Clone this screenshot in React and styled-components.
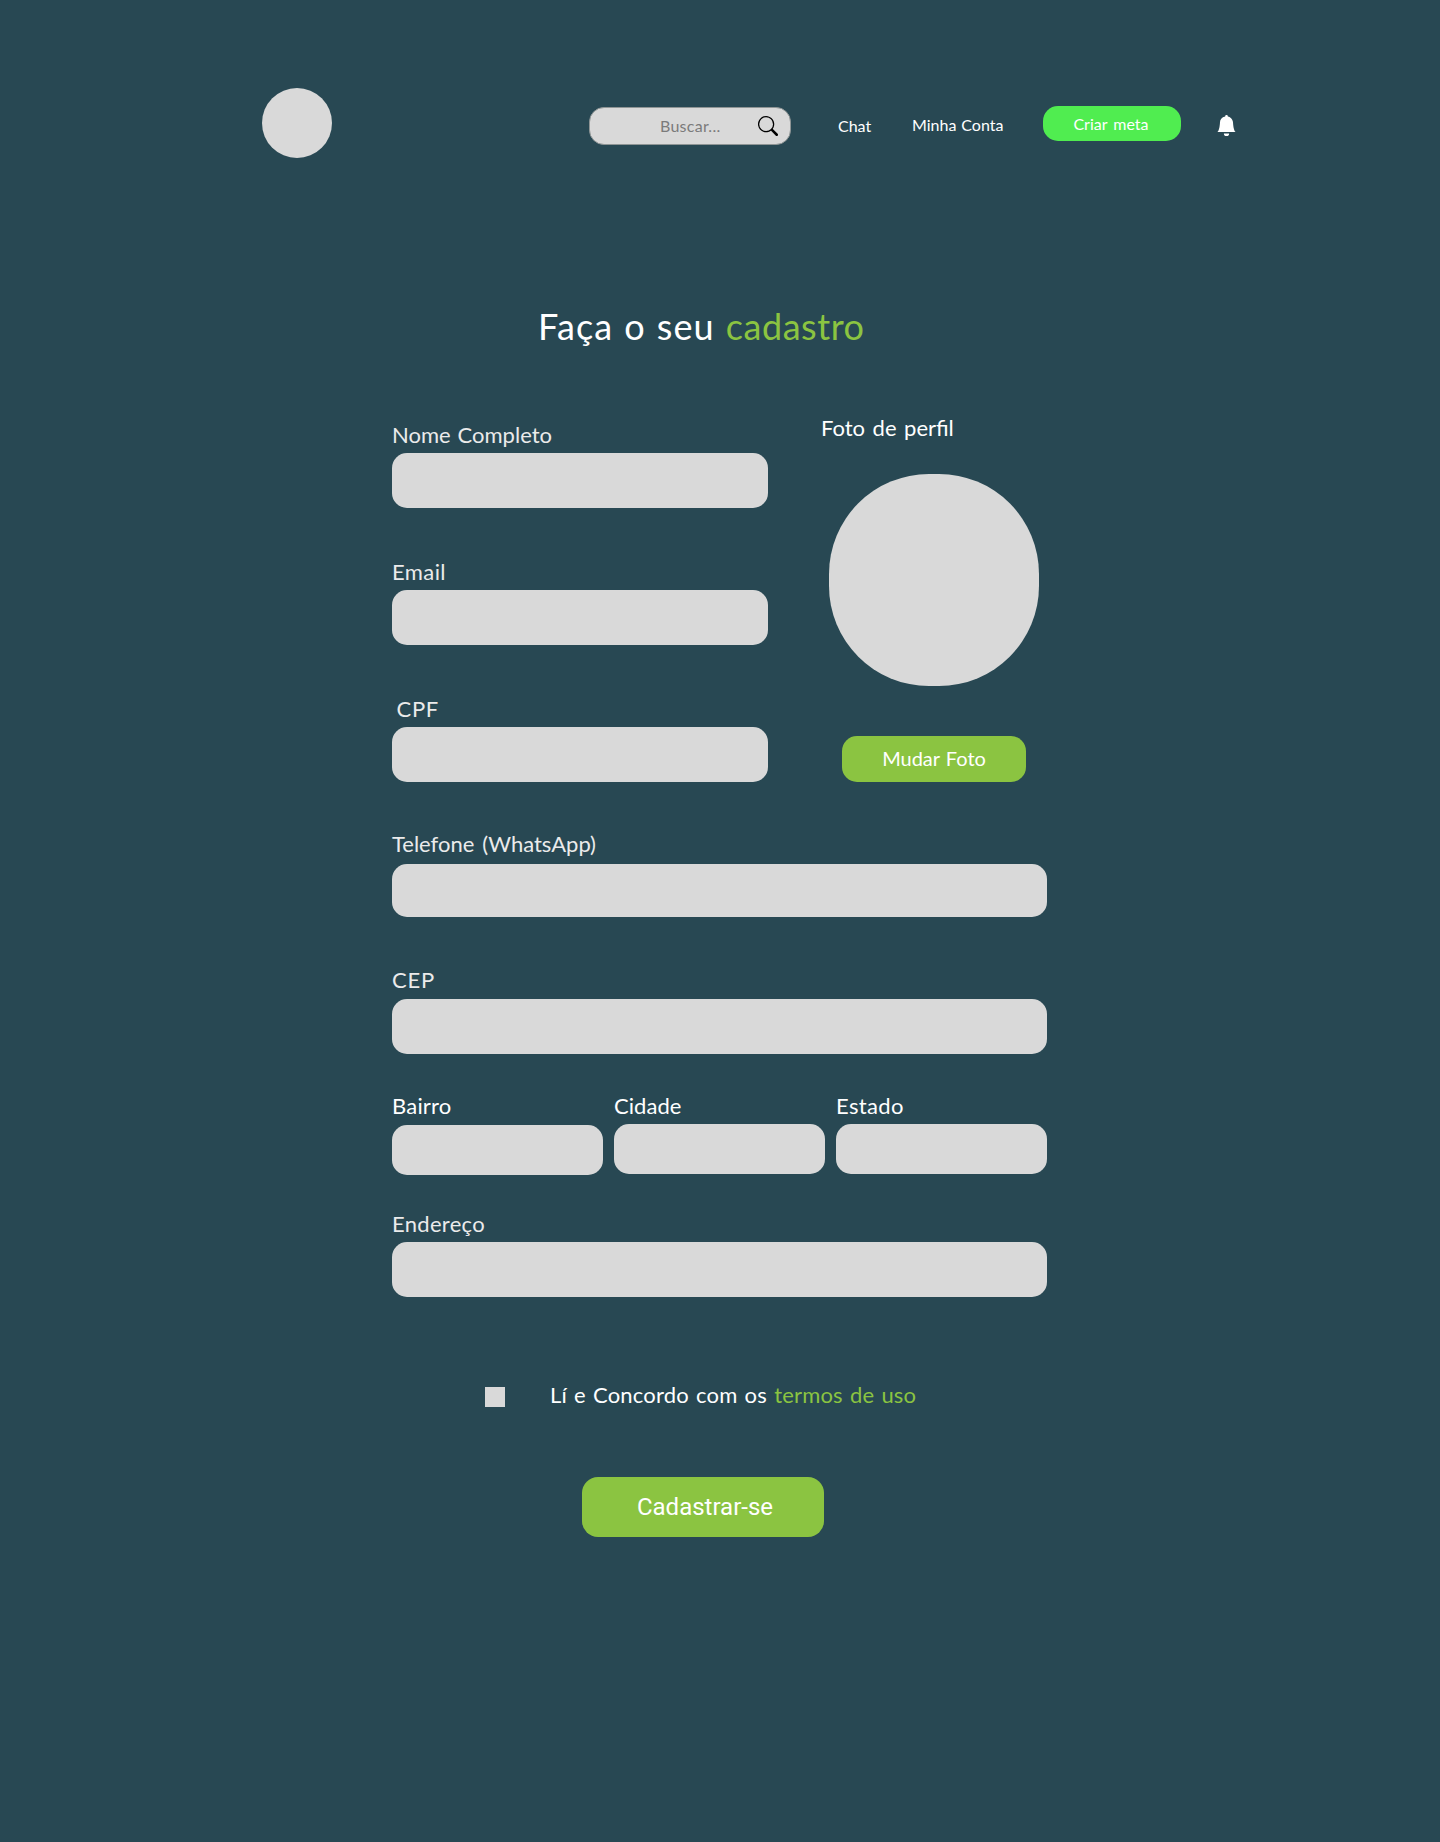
import React from "react";
import styled, { createGlobalStyle } from "styled-components";
import { BsBellFill, BsSearch } from "react-icons/bs";

const colors = {
  page: "#284853",
  field: "#d9d9d9",
  green: "#8bc441",
  bright: "#50ed50",
  label: "#ebebeb",
};

const GlobalStyle = createGlobalStyle`
  *, *::before, *::after { box-sizing: border-box; }
  body {
    margin: 0;
    background: ${colors.page};
    color: #fff;
    font-family: Lato, "Open Sans", sans-serif;
  }
  input, button { font-family: inherit; }
`;

const Page = styled.div`
  min-height: 1842px;
  padding-top: 88px;
`;

const Header = styled.header`
  display: flex;
  align-items: flex-start;
  height: 70px;
  padding-left: 262px;
`;

const Logo = styled.div`
  width: 70px;
  height: 70px;
  border-radius: 50%;
  background: ${colors.field};
`;

const SearchBox = styled.label`
  display: flex;
  align-items: center;
  width: 202px;
  height: 38px;
  margin: 19px 0 0 257px;
  padding: 0 12px 0 70px;
  border: 1px solid #8f9595;
  border-radius: 15px;
  background: ${colors.field};
  color: #000;
`;

const SearchInput = styled.input`
  width: 98px;
  height: 20px;
  margin-bottom: 2px;
  padding: 0;
  border: 0;
  outline: 0;
  background: transparent;
  font-size: 16px;
  letter-spacing: 0.26px;
  &::placeholder { color: #7b7b7b; opacity: 1; }
`;

const NavLink = styled.a`
  margin: ${(p) => p.$top}px 0 0 ${(p) => p.$left}px;
  width: ${(p) => p.$width}px;
  font-size: 16px;
  line-height: 20px;
  white-space: nowrap;
  word-spacing: 0.8px;
`;

const Button = styled.button`
  border: 0;
  border-radius: 15px;
  padding: 0;
  color: #fff;
  background: ${colors.green};
`;

const GoalButton = styled(Button)`
  width: 138px;
  height: 35px;
  margin: 18px 35px 0 0;
  padding: 0 2px 0 0;
  background: ${colors.bright};
  font-size: 16px;
  line-height: 35px;
  word-spacing: 2px;
`;

const Bell = styled(BsBellFill)`
  margin-top: 27px;
`;

const Title = styled.h1`
  margin: 146px 0 0 538px;
  font-size: 36px;
  font-weight: 400;
  line-height: 44px;
  letter-spacing: 1.1px;
  word-spacing: 0.7px;
`;

const Accent = styled.span`
  color: ${colors.green};
`;

const TitleAccent = styled(Accent)`
  letter-spacing: 0.55px;
`;

const Form = styled.form`
  width: 655px;
  margin: 66px 0 0 392px;
`;

const TopSection = styled.div`
  display: grid;
  grid-template-columns: 376px 1fr;
`;

const PersonalData = styled.div`
  display: flex;
  flex-direction: column;
  gap: 50px;
  padding-top: 7px;
`;

const FieldGroup = styled.label`
  display: flex;
  flex-direction: column;
  gap: ${(p) => p.$gap || 5}px;
  margin-top: ${(p) => p.$top || 0}px;
`;

const FieldName = styled.span`
  height: 27px;
  padding-left: 2px;
  margin-left: ${(p) => (p.$shift || 0) - 2}px;
  color: ${(p) => (p.$bright ? "#fff" : colors.label)};
  font-size: 22px;
  line-height: 27px;
  letter-spacing: ${(p) => p.$spacing || 0}px;
  word-spacing: ${(p) => p.$word || 0}px;
`;

const Input = styled.input`
  width: 100%;
  height: ${(p) => p.$height || 55}px;
  padding: 0 16px;
  border: 0;
  border-radius: 15px;
  outline: 0;
  background: ${colors.field};
  font-size: 20px;
`;

const PhotoPanel = styled.div`
  display: flex;
  flex-direction: column;
  align-items: center;
  padding-left: 53px;
`;

const PhotoLabel = styled.span`
  align-self: flex-start;
  font-size: 22px;
  line-height: 27px;
  word-spacing: 1.9px;
`;

const Photo = styled.div`
  width: 210px;
  height: 212px;
  margin: 33px 0 50px;
  border-radius: 100px;
  background: ${colors.field};
`;

const PhotoButton = styled(Button)`
  width: 184px;
  height: 46px;
  padding-bottom: 2px;
  font-size: 20px;
  line-height: 44px;
  word-spacing: 1px;
`;

const AddressRow = styled.div`
  display: grid;
  grid-template-columns: repeat(3, 211px);
  column-gap: 11px;
  align-items: start;
  margin-top: 38px;
`;

const Terms = styled.label`
  display: flex;
  align-items: flex-start;
  margin: 84px 0 0 93px;
  font-size: 22px;
  line-height: 27px;
  letter-spacing: 0.18px;
  word-spacing: 1.35px;
  white-space: nowrap;
`;

const Checkbox = styled.input`
  appearance: none;
  width: 20px;
  height: 20px;
  margin: 6px 45px 0 0;
  background: ${colors.field};
`;

const SubmitButton = styled(Button)`
  display: block;
  width: 242px;
  height: 60px;
  margin: 69px 0 0 190px;
  padding-left: 4px;
  border-radius: 16px;
  font-family: Roboto, sans-serif;
  font-size: 24px;
`;

function Field({ name, gap, top, height, type = "text", ...label }) {
  return (
    <FieldGroup $gap={gap} $top={top}>
      <FieldName {...label}>{name}</FieldName>
      <Input type={type} $height={height} />
    </FieldGroup>
  );
}

export default function App() {
  return (
    <Page>
      <GlobalStyle />
      <Header>
        <Logo />
        <SearchBox>
          <SearchInput placeholder="Buscar..." />
          <BsSearch size={20} />
        </SearchBox>
        <NavLink $top={28} $left={47} $width={74}>Chat</NavLink>
        <NavLink $top={27} $left={0} $width={131}>Minha Conta</NavLink>
        <GoalButton type="button">Criar meta</GoalButton>
        <Bell size={21} />
      </Header>

      <Title>
        Faça o seu <TitleAccent>cadastro</TitleAccent>
      </Title>

      <Form>
        <TopSection>
          <PersonalData>
            <Field name="Nome Completo" $word={1.3} />
            <Field name="Email" type="email" $spacing={0.4} />
            <Field name="CPF" $shift={4.5} $spacing={0.7} />
          </PersonalData>
          <PhotoPanel>
            <PhotoLabel>Foto de perfil</PhotoLabel>
            <Photo />
            <PhotoButton type="button">Mudar Foto</PhotoButton>
          </PhotoPanel>
        </TopSection>

        <Field name="Telefone (WhatsApp)" type="tel" top={48} gap={7} height={53} $word={2.4} />
        <Field name="CEP" top={49} gap={6} $spacing={0.8} />
        <AddressRow>
          <Field name="Bairro" gap={6} height={50} $bright $spacing={0.2} />
          <Field name="Cidade" height={50} $bright $spacing={0.05} />
          <Field name="Estado" height={50} $bright $spacing={0.36} />
        </AddressRow>
        <Field name="Endereço" top={35} $spacing={0.3} />

        <Terms>
          <Checkbox type="checkbox" />
          <span>
            Lí e Concordo com os <Accent>termos de uso</Accent>
          </span>
        </Terms>
        <SubmitButton type="button">Cadastrar-se</SubmitButton>
      </Form>
    </Page>
  );
}
